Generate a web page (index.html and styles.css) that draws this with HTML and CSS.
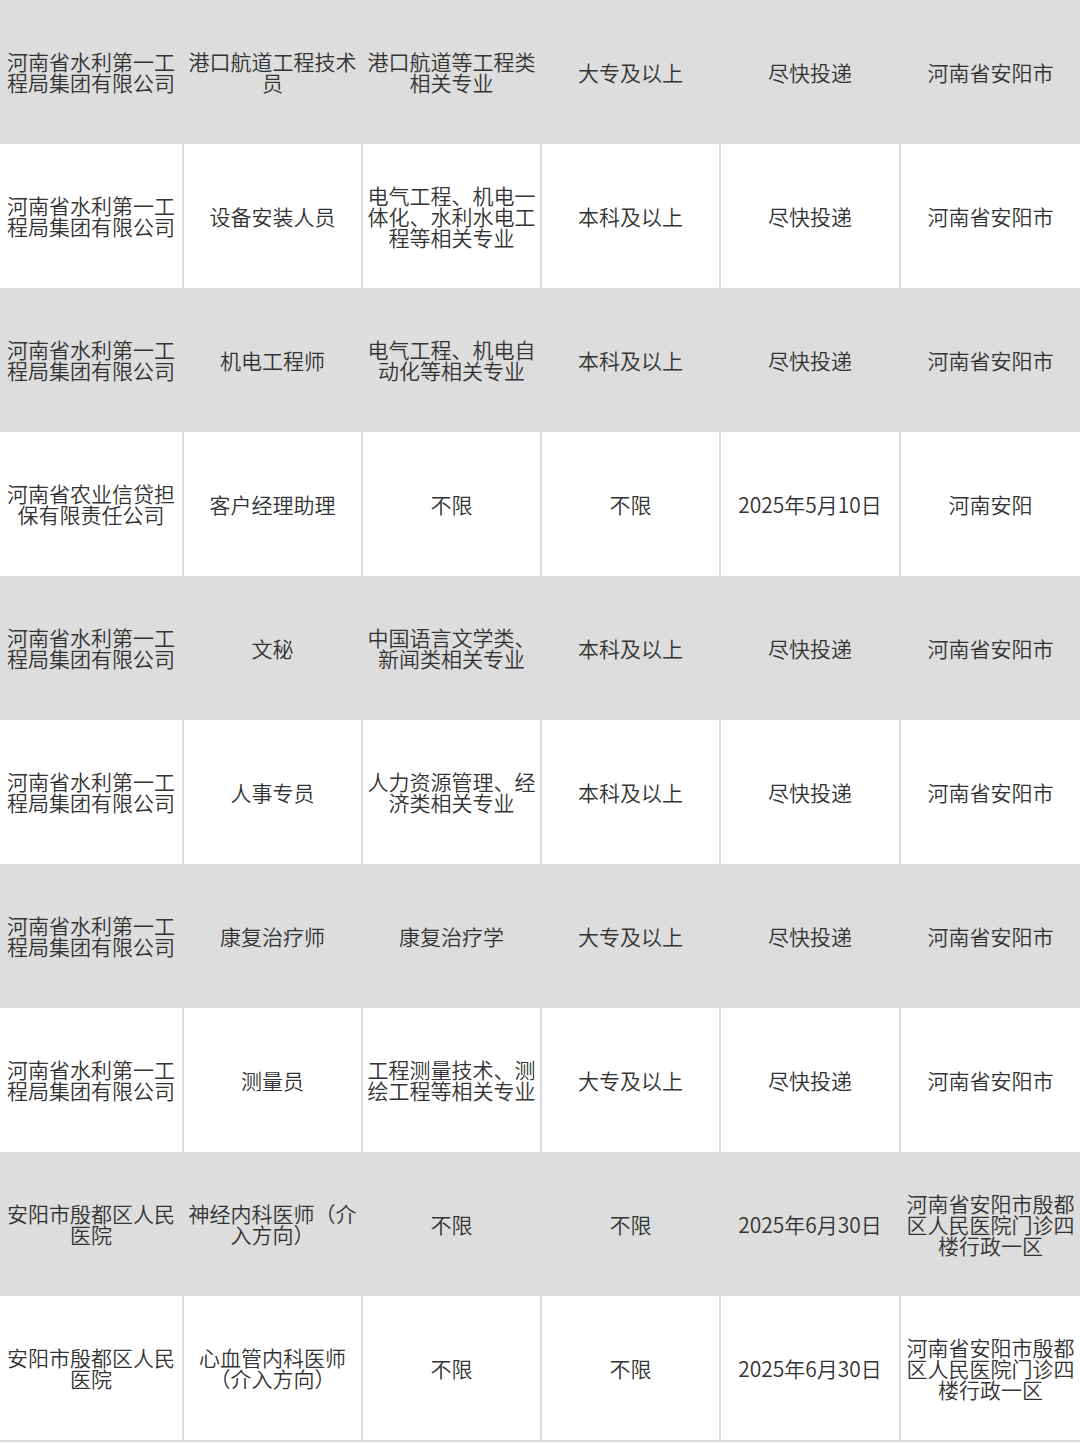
FILE: index.html
```html
<!DOCTYPE html>
<html lang="zh-CN">
<head>
<meta charset="utf-8">
<title>招聘岗位</title>
<link rel="stylesheet" href="styles.css">
</head>
<body>
<div class="table">
  <div class="row gray">
    <div class="cell">河南省水利第一工程局集团有限公司</div>
    <div class="cell">港口航道工程技术员</div>
    <div class="cell">港口航道等工程类相关专业</div>
    <div class="cell">大专及以上</div>
    <div class="cell">尽快投递</div>
    <div class="cell">河南省安阳市</div>
  </div>
  <div class="row white">
    <div class="cell">河南省水利第一工程局集团有限公司</div>
    <div class="cell">设备安装人员</div>
    <div class="cell">电气工程、机电一体化、水利水电工程等相关专业</div>
    <div class="cell">本科及以上</div>
    <div class="cell">尽快投递</div>
    <div class="cell">河南省安阳市</div>
  </div>
  <div class="row gray">
    <div class="cell">河南省水利第一工程局集团有限公司</div>
    <div class="cell">机电工程师</div>
    <div class="cell">电气工程、机电自动化等相关专业</div>
    <div class="cell">本科及以上</div>
    <div class="cell">尽快投递</div>
    <div class="cell">河南省安阳市</div>
  </div>
  <div class="row white">
    <div class="cell">河南省农业信贷担保有限责任公司</div>
    <div class="cell">客户经理助理</div>
    <div class="cell">不限</div>
    <div class="cell">不限</div>
    <div class="cell">2025年5月10日</div>
    <div class="cell">河南安阳</div>
  </div>
  <div class="row gray">
    <div class="cell">河南省水利第一工程局集团有限公司</div>
    <div class="cell">文秘</div>
    <div class="cell">中国语言文学类、新闻类相关专业</div>
    <div class="cell">本科及以上</div>
    <div class="cell">尽快投递</div>
    <div class="cell">河南省安阳市</div>
  </div>
  <div class="row white">
    <div class="cell">河南省水利第一工程局集团有限公司</div>
    <div class="cell">人事专员</div>
    <div class="cell">人力资源管理、经济类相关专业</div>
    <div class="cell">本科及以上</div>
    <div class="cell">尽快投递</div>
    <div class="cell">河南省安阳市</div>
  </div>
  <div class="row gray">
    <div class="cell">河南省水利第一工程局集团有限公司</div>
    <div class="cell">康复治疗师</div>
    <div class="cell">康复治疗学</div>
    <div class="cell">大专及以上</div>
    <div class="cell">尽快投递</div>
    <div class="cell">河南省安阳市</div>
  </div>
  <div class="row white">
    <div class="cell">河南省水利第一工程局集团有限公司</div>
    <div class="cell">测量员</div>
    <div class="cell">工程测量技术、测绘工程等相关专业</div>
    <div class="cell">大专及以上</div>
    <div class="cell">尽快投递</div>
    <div class="cell">河南省安阳市</div>
  </div>
  <div class="row gray">
    <div class="cell">安阳市殷都区人民医院</div>
    <div class="cell">神经内科医师（介入方向）</div>
    <div class="cell">不限</div>
    <div class="cell">不限</div>
    <div class="cell">2025年6月30日</div>
    <div class="cell">河南省安阳市殷都区人民医院门诊四楼行政一区</div>
  </div>
  <div class="row white">
    <div class="cell">安阳市殷都区人民医院</div>
    <div class="cell">心血管内科医师（介入方向）</div>
    <div class="cell">不限</div>
    <div class="cell">不限</div>
    <div class="cell">2025年6月30日</div>
    <div class="cell">河南省安阳市殷都区人民医院门诊四楼行政一区</div>
  </div>
</div>
</body>
</html>
```

FILE: styles.css
```css
html, body {
  margin: 0;
  padding: 0;
  background: #ffffff;
}

body {
  font-family: "Noto Sans CJK SC", "Noto Sans", sans-serif;
  font-weight: 350;
  color: #333333;
}

.table {
  width: 1080px;
  border-bottom: 2px solid #dddddd;
}

.row {
  display: grid;
  grid-template-columns: 182px 177px 177px 177px 178px 1fr;
  column-gap: 2px;
  height: 144px;
  background: #dddddd;
}

.cell {
  display: flex;
  align-items: center;
  justify-content: center;
  text-align: center;
  font-size: 21px;
  line-height: 21px;
  padding: 0 4px;
  box-sizing: border-box;
}

.white .cell {
  background: #ffffff;
}

.gray .cell {
  background: #dddddd;
}
```
